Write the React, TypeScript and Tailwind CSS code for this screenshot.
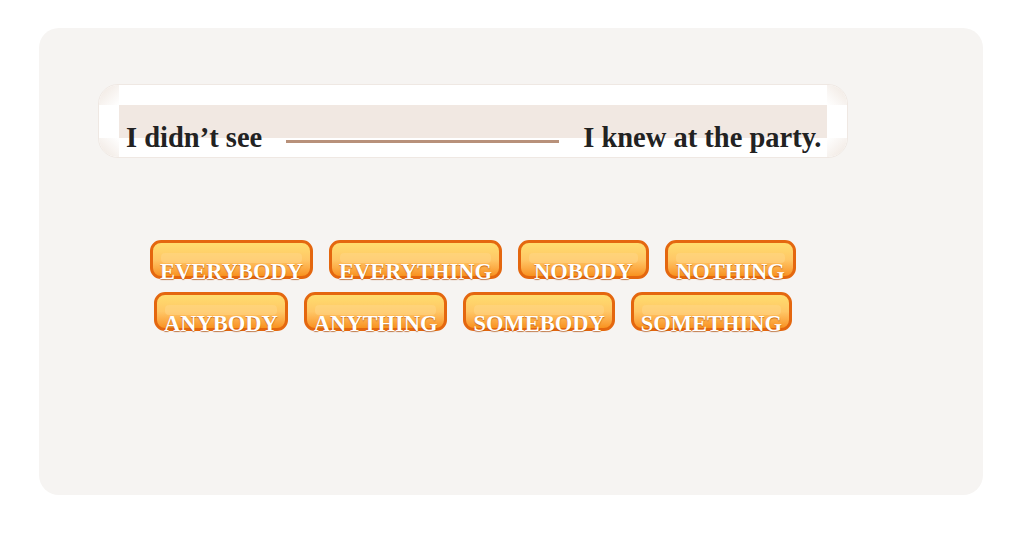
const ROW_ONE = ["EVERYBODY", "EVERYTHING", "NOBODY", "NOTHING"];
const ROW_TWO = ["ANYBODY", "ANYTHING", "SOMEBODY", "SOMETHING"];

function WordChip({ word }: { word: string }) {
  return (
    <button
      type="button"
      className="relative h-[39px] min-w-[131px] overflow-visible rounded-[11px] border-[3px] border-[#e4670f] bg-gradient-to-b from-[#ffdd6e] via-[#ffc766] to-[#f8921c] px-[7px] text-center"
    >
      <span className="pointer-events-none absolute inset-x-[8px] top-[10px] h-[10px] rounded-sm bg-[#ffd88a]/50" />
      <span className="relative block pt-[18px] font-['Liberation_Serif',serif] text-[22.5px] font-bold leading-none text-white [text-shadow:0_1px_1px_rgba(170,70,0,0.7)]">
        {word}
      </span>
    </button>
  );
}

export default function App() {
  return (
    <div className="h-[546px] w-[1022px] bg-white pl-[39px] pt-[28px]">
      <div className="h-[467px] w-[944px] rounded-[20px] bg-[#f6f4f2] pl-[59px] pt-[56px]">
        <div className="flex h-[74px] w-[750px] overflow-hidden rounded-[20px] border border-[#efe8e3] bg-white">
          <div className="flex w-[20px] flex-col">
            <div className="h-[20px] bg-gradient-to-br from-[#efe6df] to-white" />
            <div className="h-[33px] bg-white" />
            <div className="flex-1 bg-gradient-to-tr from-[#efe6df] to-white" />
          </div>
          <div className="flex flex-1 flex-col">
            <div className="h-[20px] bg-white" />
            <div className="h-[33px] bg-[#f1e8e2]" />
            <div className="flex-1 bg-white" />
          </div>
          <div className="flex w-[20px] flex-col">
            <div className="h-[20px] bg-gradient-to-bl from-[#efe6df] to-white" />
            <div className="h-[33px] bg-white" />
            <div className="flex-1 bg-gradient-to-tl from-[#efe6df] to-white" />
          </div>
        </div>
        <div className="-mt-[74px] flex h-[74px] w-[750px] items-end pb-[6px] pl-[28px] font-['Liberation_Serif',serif] text-[28.5px] font-bold leading-none text-[#222222]">
          <span>I didn’t see</span>
          <span className="mx-[24px] mb-[9px] h-[3px] w-[273px] bg-[#b8917a]" />
          <span>I knew at the party.</span>
        </div>
        <div className="mt-[82px] flex w-[750px] flex-col items-center gap-[13px]">
          <div className="flex gap-[16px]">
            {ROW_ONE.map((w) => (
              <WordChip key={w} word={w} />
            ))}
          </div>
          <div className="flex gap-[16px]">
            {ROW_TWO.map((w) => (
              <WordChip key={w} word={w} />
            ))}
          </div>
        </div>
      </div>
    </div>
  );
}
